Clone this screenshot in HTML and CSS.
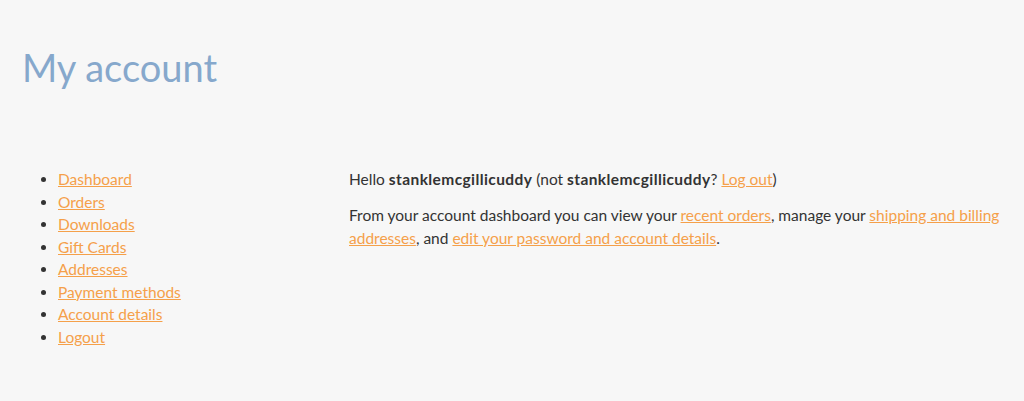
FILE: index.html
```html
<!DOCTYPE html>
<html>
<head>
<meta charset="utf-8">
<link rel="stylesheet" href="styles.css">
</head>
<body>
<div class="page">
  <h1 class="title">My account</h1>
  <div class="account">
    <nav class="account-nav">
      <ul>
        <li><a href="#">Dashboard</a></li>
        <li><a href="#">Orders</a></li>
        <li><a href="#">Downloads</a></li>
        <li><a href="#">Gift Cards</a></li>
        <li><a href="#">Addresses</a></li>
        <li><a href="#">Payment methods</a></li>
        <li><a href="#">Account details</a></li>
        <li><a href="#">Logout</a></li>
      </ul>
    </nav>
    <div class="account-content">
      <p>Hello <strong>stanklemcgillicuddy</strong> (not <strong>stanklemcgillicuddy</strong>? <a href="#">Log out</a>)</p>
      <p>From your account dashboard you can view your <a href="#">recent orders</a>, manage your <a href="#">shipping and billing addresses</a>, and <a href="#">edit your password and account details</a>.</p>
    </div>
  </div>
</div>
</body>
</html>
```
FILE: styles.css
```css
html, body {
  margin: 0;
  padding: 0;
  background: #f7f7f7;
}
body {
  font-family: Lato, "Open Sans", sans-serif;
  font-size: 15.5px;
  line-height: 22.5px;
  color: #333333;
}
.page {
  padding: 0 10px 0 22px;
}
.title {
  margin: 0;
  padding-top: 41px;
  font-size: 38px;
  line-height: 52px;
  font-weight: 400;
  color: #86a8cc;
}
.account {
  display: grid;
  grid-template-columns: 327px 1fr;
  margin-top: 75px;
}
.account-nav ul {
  margin: 0;
  padding-left: 36px;
}
.account-content p {
  margin: 0 0 12.5px;
  line-height: 23px;
}
a {
  color: #f5a04a;
  text-decoration: underline;
}
strong {
  font-weight: 700;
  color: #333333;
  letter-spacing: 0.4px;
}
```
